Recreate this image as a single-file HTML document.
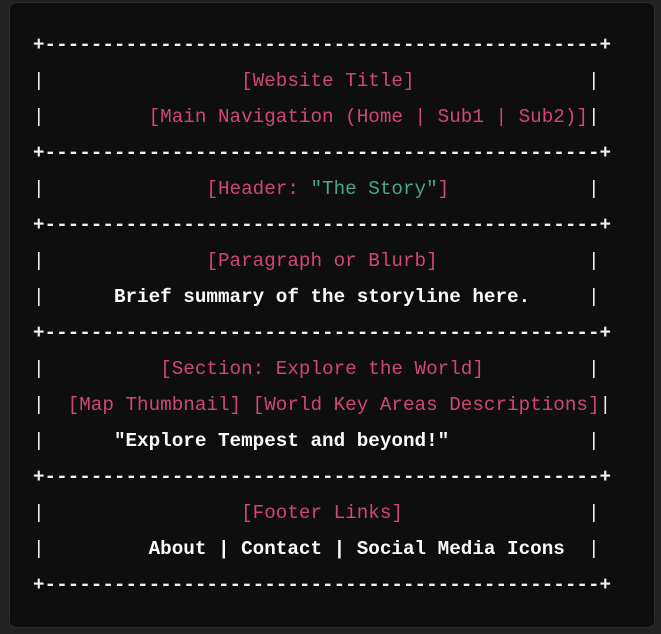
<!DOCTYPE html>
<html><head><meta charset="utf-8"><style>
html,body{margin:0;padding:0;background:#212121;width:661px;height:634px;overflow:hidden}
.panel{position:absolute;left:9px;top:2px;width:644px;height:624px;background:#0e0e0e;border:1px solid #2e2e2e;border-radius:7px}
pre{position:absolute;left:33px;top:27px;margin:0;font-family:"Liberation Mono","DejaVu Sans Mono",monospace;font-size:19.28px;line-height:36px;color:#f0f0f0;white-space:pre}
.p{color:#d0467a}.g{color:#4aa888}.b{font-weight:bold;color:#fafafa}.d{font-weight:bold}
</style></head><body>
<div class="panel"></div>
<pre><span class="d">+------------------------------------------------+</span>
|                 <span class="p">[Website Title]</span>               |
|         <span class="p">[Main Navigation (Home | Sub1 | Sub2)]</span>|
<span class="d">+------------------------------------------------+</span>
|              <span class="p">[Header: </span><span class="g">"The Story"</span><span class="p">]</span>            |
<span class="d">+------------------------------------------------+</span>
|              <span class="p">[Paragraph or Blurb]</span>             |
|      <span class="b">Brief summary of the storyline here.</span>     |
<span class="d">+------------------------------------------------+</span>
|          <span class="p">[Section: Explore the World]</span>         |
|  <span class="p">[Map Thumbnail] [World Key Areas Descriptions]</span>|
|      <span class="b">"Explore Tempest and beyond!"</span>            |
<span class="d">+------------------------------------------------+</span>
|                 <span class="p">[Footer Links]</span>                |
|         <span class="b">About | Contact | Social Media Icons</span>  |
<span class="d">+------------------------------------------------+</span></pre>
</body></html>
